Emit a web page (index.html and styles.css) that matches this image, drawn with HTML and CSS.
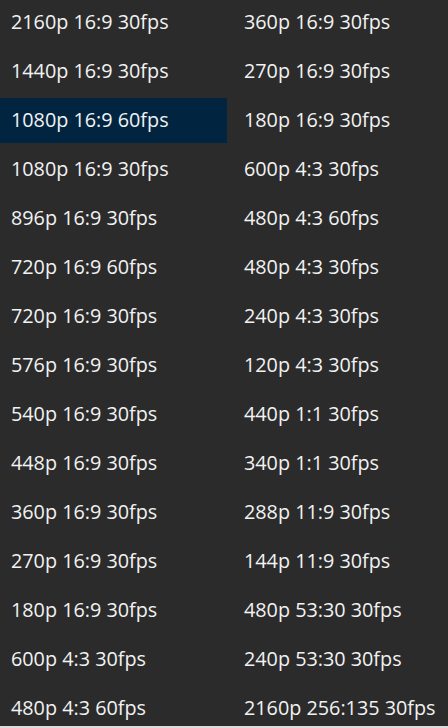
FILE: index.html
```html
<!DOCTYPE html>
<html>
<head>
<meta charset="utf-8">
<link rel="stylesheet" href="styles.css">
</head>
<body>
<div class="panel">
  <ul class="list">
    <li class="item">2160p 16:9 30fps</li>
    <li class="item">1440p 16:9 30fps</li>
    <li class="item selected">1080p 16:9 60fps</li>
    <li class="item">1080p 16:9 30fps</li>
    <li class="item">896p 16:9 30fps</li>
    <li class="item">720p 16:9 60fps</li>
    <li class="item">720p 16:9 30fps</li>
    <li class="item">576p 16:9 30fps</li>
    <li class="item">540p 16:9 30fps</li>
    <li class="item">448p 16:9 30fps</li>
    <li class="item">360p 16:9 30fps</li>
    <li class="item">270p 16:9 30fps</li>
    <li class="item">180p 16:9 30fps</li>
    <li class="item">600p 4:3 30fps</li>
    <li class="item">480p 4:3 60fps</li>
    <li class="item">360p 16:9 30fps</li>
    <li class="item">270p 16:9 30fps</li>
    <li class="item">180p 16:9 30fps</li>
    <li class="item">600p 4:3 30fps</li>
    <li class="item">480p 4:3 60fps</li>
    <li class="item">480p 4:3 30fps</li>
    <li class="item">240p 4:3 30fps</li>
    <li class="item">120p 4:3 30fps</li>
    <li class="item">440p 1:1 30fps</li>
    <li class="item">340p 1:1 30fps</li>
    <li class="item">288p 11:9 30fps</li>
    <li class="item">144p 11:9 30fps</li>
    <li class="item">480p 53:30 30fps</li>
    <li class="item">240p 53:30 30fps</li>
    <li class="item">2160p 256:135 30fps</li>
  </ul>
</div>
</body>
</html>
```
FILE: styles.css
```css
html, body {
  margin: 0;
  padding: 0;
  background: #dcdcdc;
}
.panel {
  width: 448px;
  height: 726px;
  background: #2b2b2b;
  overflow: hidden;
}
.list {
  list-style: none;
  margin: 0;
  padding: 0;
  display: grid;
  grid-template-columns: 227px 227px;
  grid-template-rows: repeat(15, 45px);
  grid-auto-flow: column;
  column-gap: 6px;
  row-gap: 4px;
  font-family: "Open Sans", "Noto Sans", sans-serif;
  font-size: 19.8px;
  color: #f2f2f2;
}
.item {
  display: flex;
  align-items: center;
  padding: 0 0 3px 11px;
  white-space: nowrap;
}
.selected {
  background: #012541;
}
```
